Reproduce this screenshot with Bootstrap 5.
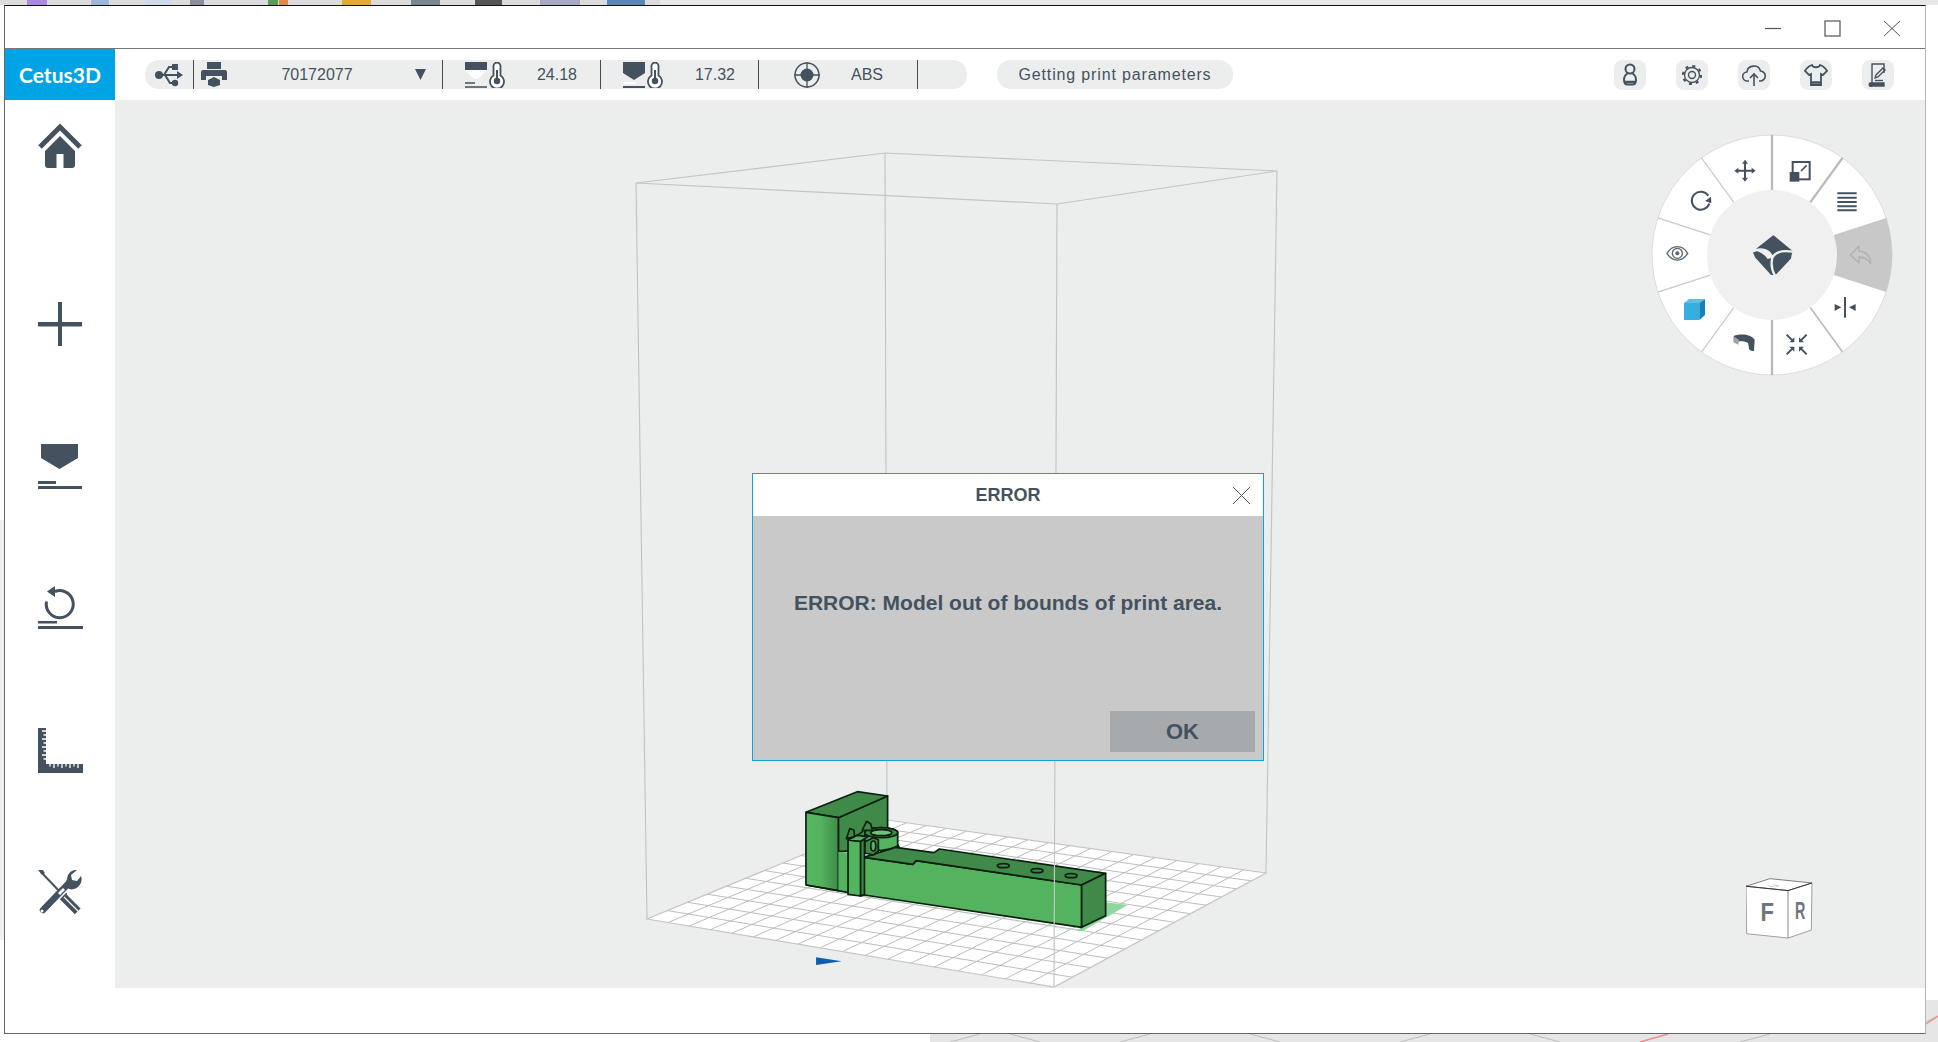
<!DOCTYPE html>
<html lang="en">
<head>
    <meta charset="UTF-8">
    <title>Cetus3D</title>
    <link href="https://cdn.jsdelivr.net/npm/bootstrap@5.3.0/dist/css/bootstrap.min.css" rel="stylesheet">
    <style>
        html, body {
            margin: 0;
            width: 1938px;
            height: 1042px;
            overflow: hidden;
            background: #fff;
            font-family: "Liberation Sans", Arial, sans-serif;
            color: #44525f;
        }
        svg { display: block; }
        .desk-back { position: absolute; left: 0; top: 0; z-index: 0; }
        .app-window {
            position: relative;
            z-index: 1;
            margin: 5px 0 0 4px;
            width: 1922px;
            height: 1029px;
            background: #fff;
            border-top: 1px solid #111;
            border-left: 1px solid #666;
            border-right: 1px solid #b5b5b5;
            border-bottom: 1px solid #666;
        }
        .title-strip { height: 43px; border-bottom: 1px solid #777; padding: 2px 24px 0 0; gap: 42px; }
        .tool-strip { height: 51px; padding-right: 31px; }
        .brand-box {
            width: 110px;
            height: 51px;
            background: #00a4e4;
            color: #fff;
            font-family: Lato, "Liberation Sans", sans-serif;
            font-size: 21px;
            font-weight: 700;
        }
        .tool-pill { height: 29px; background: #eceeed; border-radius: 14px; font-size: 16px; }
        .status-pill { width: 822px; margin-left: 30px; }
        .msg-pill { width: 236px; margin-left: 30px; font-size: 16px; letter-spacing: .85px; }
        .pill-cell { height: 29px; border-left: 1px solid #4a4a4a; position: relative; }
        .pill-cell:first-child { border-left: 0; }
        .cell-usb { width: 48px; padding-left: 10px; }
        .cell-printer { width: 249px; padding-left: 7px; }
        .cell-temp { width: 158px; padding-left: 22px; }
        .cell-mat { width: 159px; padding-left: 35px; }
        .cell-end { width: 49px; }
        .serial-no { width: 180px; text-align: center; }
        .temp-val { width: 92px; text-align: center; padding-left: 12px; }
        .mat-val { width: 82px; text-align: center; padding-left: 12px; }
        .side-btns { gap: 30px; }
        .side-btn { width: 32px; height: 30px; background: #eceeed; border-radius: 8px; }
        .work-row { height: 888px; }
        .side-rail { width: 110px; padding-top: 23px; }
        .rail-btn { width: 110px; height: 45px; margin-bottom: 97px; }
        .rail-btn.first-one { margin-bottom: 134px; }
        .view-area { width: 1810px; height: 888px; background: #eceeed; position: relative; }
        .view-area svg.scene { position: absolute; left: 0; top: 0; }
        .radial-box { position: absolute; left: 1525px; top: 25px; }
        .cube-box { position: absolute; left: 1631px; top: 778px; }
        .error-box {
            position: absolute;
            left: 637px;
            top: 373px;
            width: 512px;
            height: 288px;
            border: 1px solid #0fa3dc;
            background: #c9c9c9;
            border-radius: 0;
        }
        .error-head {
            height: 42px;
            background: #fff;
            font-size: 18px;
            font-weight: 700;
            position: relative;
        }
        .error-x { position: absolute; right: 12px; top: 12px; }
        .error-text { font-size: 21px; font-weight: 700; padding-top: 71px; height: 195px; }
        .error-foot { padding-right: 8px; }
        .ok-btn {
            width: 145px;
            height: 41px;
            background: #a6aaad;
            border: 0;
            border-radius: 0;
            font-size: 22px;
            font-weight: 700;
            color: #44525f;
            padding: 0;
        }
        .floor-line { stroke: #bdbdbd; stroke-width: 1; fill: none; }
        .frame-line { stroke: #c4c4c4; stroke-width: 1.2; fill: none; }
        .mdl * { vector-effect: non-scaling-stroke; stroke-linejoin: round; }
        .mdl .edge { stroke: #0d1f10; stroke-width: 1.7; }
        .cube-txt { font-family: "Liberation Sans", sans-serif; font-weight: 700; fill: #6e757b; }
    </style>
</head>
<body>
    <!-- other windows behind the app -->
    <svg class="desk-back" width="1938" height="1042" viewBox="0 0 1938 1042">
        <rect width="1938" height="5" fill="#e8e8e8"/>
        <rect width="660" height="5" fill="#dcdcdc"/>
        <rect x="27" width="20" height="5" fill="#a98ae0"/>
        <rect x="91" width="18" height="5" fill="#9bb8dc"/>
        <rect x="145" width="27" height="5" fill="#cfd9ea"/>
        <rect x="190" width="14" height="5" fill="#8a8f99"/>
        <rect x="268" width="10" height="5" fill="#5c9a58"/>
        <rect x="279" width="9" height="5" fill="#e08a4a"/>
        <rect x="342" width="29" height="5" fill="#e0a93a"/>
        <rect x="411" width="29" height="5" fill="#7b8490"/>
        <rect x="475" width="27" height="5" fill="#555"/>
        <rect x="540" width="40" height="5" fill="#a9a9c4"/>
        <rect x="607" width="38" height="5" fill="#5b86b5"/>
        <rect x="0" y="520" width="4" height="420" fill="#efefef"/>
        <rect x="1926" y="0" width="12" height="5" fill="#e8e8e8"/>
        <rect x="930" y="1034" width="1008" height="8" fill="#e6e6e6"/>
        <rect x="1926" y="1000" width="12" height="42" fill="#e6e6e6"/>
        <path d="M950 1042l30-8M1010 1034l30 8M1120 1042l30-8M1250 1034l30 8M1400 1042l30-8M1530 1034l30 8M1740 1042l30-8M1926 1022l12-6" stroke="#bdbdbd" fill="none"/>
        <path d="M1640 1042l28-8M1926 1024l12-8" stroke="#ee8f8f" stroke-width="1.5" fill="none"/>
    </svg>

    <div class="app-window d-flex flex-column">
        <div class="title-strip d-flex align-items-center justify-content-end">
            <svg width="17" height="17" viewBox="0 0 17 17"><path d="M0 8.500h16" stroke="#555" stroke-width="1.200"/></svg>
            <svg width="17" height="17" viewBox="0 0 17 17"><rect x="1" y="1" width="15" height="15" fill="none" stroke="#555" stroke-width="1.200"/></svg>
            <svg width="18" height="17" viewBox="0 0 18 17"><path d="M1 1l16 15M17 1L1 16" stroke="#555" stroke-width="1"/></svg>
        </div>

        <div class="tool-strip d-flex align-items-center">
            <div class="brand-box d-flex align-items-center justify-content-center">Cetus3D</div>
            <div class="tool-pill status-pill d-flex align-items-center">
                <div class="pill-cell cell-usb d-flex align-items-center">
                    <svg width="28" height="24" viewBox="0 0 28 24" fill="#44525f">
                        <circle cx="4" cy="12" r="4"/>
                        <path d="M4 12h19" stroke="#44525f" stroke-width="2"/>
                        <path d="M28 12l-6-4v8z"/>
                        <path d="M9 12l5-8h4M10 12l5 8h3" fill="none" stroke="#44525f" stroke-width="2"/>
                        <rect x="17" y="1" width="6" height="6"/>
                        <circle cx="20" cy="20" r="3.200"/>
                    </svg>
                </div>
                <div class="pill-cell cell-printer d-flex align-items-center">
                    <svg width="26" height="25" viewBox="0 0 26 25" fill="#44525f">
                        <path d="M6 0h14v7H6z"/>
                        <path d="M2 8h22a2 2 0 0 1 2 2v8h-5v-4H5v4H0v-8a2 2 0 0 1 2-2z"/>
                        <path d="M13 15l6 3v5l-6 2-6-2v-5z"/>
                    </svg>
                    <span class="serial-no">70172077</span>
                    <svg width="11" height="11" viewBox="0 0 11 11" fill="#44525f" class="ms-2"><path d="M0 0h11L5.500 11z"/></svg>
                </div>
                <div class="pill-cell cell-temp d-flex align-items-center">
                    <svg width="40" height="26" viewBox="0 0 40 26">
                        <rect width="22" height="8" fill="#44525f"/>
                        <path d="M0 8h22L13 17H9z" fill="#fff"/>
                        <rect y="20" width="10" height="2" fill="#6b7680"/>
                        <rect y="24" width="22" height="2" fill="#6b7680"/>
                        <path d="M28.500 4a3.500 3.500 0 0 1 7 0v9.500a7 7 0 1 1-7 0z" fill="#fff" stroke="#44525f" stroke-width="1.800"/>
                        <circle cx="32" cy="19" r="3.200" fill="#44525f"/>
                        <rect x="31" y="8" width="2" height="10" fill="#44525f"/>
                    </svg>
                    <span class="temp-val">24.18</span>
                </div>
                <div class="pill-cell cell-temp d-flex align-items-center">
                    <svg width="40" height="26" viewBox="0 0 40 26">
                        <path d="M0 0h22v11L11 18 0 11z" fill="#44525f"/>
                        <rect y="20" width="13" height="2" fill="#fff"/>
                        <rect y="24" width="22" height="2" fill="#44525f"/>
                        <path d="M28.500 4a3.500 3.500 0 0 1 7 0v9.500a7 7 0 1 1-7 0z" fill="#fff" stroke="#44525f" stroke-width="1.800"/>
                        <circle cx="32" cy="19" r="3.200" fill="#44525f"/>
                        <rect x="31" y="8" width="2" height="10" fill="#44525f"/>
                    </svg>
                    <span class="temp-val">17.32</span>
                </div>
                <div class="pill-cell cell-mat d-flex align-items-center">
                    <svg width="26" height="26" viewBox="0 0 26 26">
                        <circle cx="13" cy="13" r="12" fill="none" stroke="#44525f" stroke-width="1.500"/>
                        <circle cx="13" cy="13" r="6.500" fill="#44525f"/>
                        <path d="M13 0v26M0 13h26" stroke="#44525f" stroke-width="1.300"/>
                    </svg>
                    <span class="mat-val">ABS</span>
                </div>
                <div class="pill-cell cell-end"></div>
            </div>
            <div class="tool-pill msg-pill d-flex align-items-center justify-content-center">Getting print parameters</div>
            <div class="side-btns d-flex ms-auto">
                <div class="side-btn d-flex align-items-center justify-content-center">
                    <svg width="16" height="23" viewBox="0 0 16 23" fill="none" stroke="#44525f" stroke-width="2">
                        <circle cx="8" cy="6" r="4.500"/>
                        <path d="M5.500 10.500C3 12 2 14.500 2 17c0 3 1.500 4.500 3.500 4.500h5C12.500 21.500 14 20 14 17c0-2.500-1-5-3.500-6.500"/>
                        <path d="M3 19h10" stroke-width="2.500"/>
                    </svg>
                </div>
                <div class="side-btn d-flex align-items-center justify-content-center">
                    <svg width="22" height="24" viewBox="0 0 22 24" fill="none" stroke="#44525f">
                        <circle cx="11" cy="12" r="3.500" stroke-width="1.400"/>
                        <circle cx="11" cy="12" r="7.500" stroke-width="1.300"/>
                        <circle cx="11" cy="12" r="9" stroke-width="2.200" stroke-dasharray="3 4.070"/>
                    </svg>
                </div>
                <div class="side-btn d-flex align-items-center justify-content-center">
                    <svg width="24" height="24" viewBox="0 0 24 24" fill="none" stroke="#44525f" stroke-width="1.600">
                        <path d="M7 18H5.500a4.500 4.500 0 0 1-.6-9A7 7 0 0 1 18.500 8a5 5 0 0 1-.5 10h-1"/>
                        <path d="M12 23V11M8 15l4-4 4 4"/>
                    </svg>
                </div>
                <div class="side-btn d-flex align-items-center justify-content-center">
                    <svg width="24" height="22" viewBox="0 0 24 22" fill="none" stroke="#44525f" stroke-width="1.800">
                        <path d="M8 1C5 2 3 3 1 7l4 4 2-1v11h10V10l2 1 4-4c-2-4-4-5-7-6-1 3-7 3-8 0z"/>
                        <path d="M7 18.500h10" stroke-width="2.500"/>
                    </svg>
                </div>
                <div class="side-btn d-flex align-items-center justify-content-center">
                    <svg width="20" height="24" viewBox="0 0 20 24" fill="none" stroke="#44525f" stroke-width="1.400">
                        <path d="M16 10V1H4v19"/>
                        <path d="M2 20h14v3H4a1.500 1.500 0 0 1-2-3z" fill="#44525f"/>
                        <path d="M7 15l1-3 7-7 2 2-7 7z"/>
                        <path d="M7 17.500h8"/>
                    </svg>
                </div>
            </div>
        </div>

        <div class="work-row d-flex">
            <div class="side-rail d-flex flex-column">
                <div class="rail-btn first-one d-flex justify-content-center">
                    <svg width="44" height="45" viewBox="0 0 44 45" fill="#44525f">
                        <path d="M2 24L22 4l20 20" fill="none" stroke="#44525f" stroke-width="5"/>
                        <path fill-rule="evenodd" d="M22 13l15 15v14a3 3 0 0 1-3 3H10a3 3 0 0 1-3-3V28zM18.500 31v14h7V31z"/>
                    </svg>
                </div>
                <div class="rail-btn d-flex justify-content-center">
                    <svg width="44" height="45" viewBox="0 0 44 45" fill="#44525f">
                        <rect x="20" y="0" width="4" height="44"/>
                        <rect x="0" y="20" width="44" height="4.500"/>
                    </svg>
                </div>
                <div class="rail-btn d-flex justify-content-center">
                    <svg width="44" height="45" viewBox="0 0 44 45" fill="#44525f">
                        <path d="M3 0h37v14L21.500 25 3 14z"/>
                        <rect x="0" y="37" width="18" height="3"/>
                        <rect x="0" y="42" width="44" height="3"/>
                    </svg>
                </div>
                <div class="rail-btn d-flex justify-content-center">
                    <svg width="45" height="45" viewBox="0 0 45 45" fill="#44525f">
                        <path d="M17 5.500A13.500 13.500 0 1 1 8.500 15.500" fill="none" stroke="#44525f" stroke-width="3"/>
                        <path d="M17 0v11L9 5.500z"/>
                        <rect x="0" y="35" width="19" height="2.500"/>
                        <rect x="0" y="40" width="45" height="3"/>
                    </svg>
                </div>
                <div class="rail-btn d-flex justify-content-center">
                    <svg width="45" height="45" viewBox="0 0 45 45">
                        <path d="M0 0h8v36h37v9H0z" fill="#44525f"/>
                        <path d="M8 3h-4M8 7h-2.500M8 11h-4M8 15h-2.500M8 19h-4M8 23h-2.500M8 27h-4M8 31h-2.500M12 36v2.500M16 36v4M20 36v2.500M24 36v4M28 36v2.500M32 36v4M36 36v2.500M40 36v4" stroke="#fff" stroke-width="1.300" fill="none"/>
                    </svg>
                </div>
                <div class="rail-btn d-flex justify-content-center">
                    <svg width="44" height="45" viewBox="0 0 44 45" fill="#44525f">
                        <path d="M3 2l20 21" stroke="#44525f" stroke-width="2" fill="none"/>
                        <path d="M0 0l4-1 3 4-3 2z"/>
                        <path d="M5 40L30 14" stroke="#44525f" stroke-width="6.500" stroke-linecap="round" fill="none"/>
                        <circle cx="4" cy="41" r="1.500" fill="#fff"/>
                        <path d="M29 9a9 9 0 0 1 10-9l-6 5 1 5 5 1 4-5a10 10 0 0 1-12 13 8 8 0 0 1-2-10z"/>
                        <path d="M25 26l15 15" stroke="#44525f" stroke-width="9" fill="none"/>
                        <path d="M29 24l14 14M26 27l14 14" stroke="#fff" stroke-width="1.200" fill="none"/>
                        <path d="M20 23l5-5 2 2-5 5z" fill="#fff"/>
                    </svg>
                </div>
            </div>

            <div class="view-area">
                <svg class="scene" width="1810" height="888" viewBox="115 100 1810 888">
                    <polygon points="647,919 1054,987 1266,873 887,820" fill="#fff"/>
                    <g id="floorGrid" class="floor-line"></g>
                    <path class="frame-line" d="M636 183L885 153L1277 171L1057 204Z M885 153L887 820 M647 919L1054 987L1266 873L887 820Z M636 183L647 919 M1277 171L1266 873"/>

                    <g class="mdl" transform="translate(630 770) scale(.42092 .33333)">
                        <polygon fill="#8fd69f" points="408,350 520,372 1060,482 1073,472 1130,397 1182,405 1075,484 1045,480"/>
                        <polygon fill="#3f8a49" class="edge" points="495,143 612,78 612,175 640,232 495,245"/>
                        <polygon fill="#3f8a49" class="edge" points="418,127 540,65 612,78 495,143"/>
                        <defs><linearGradient id="blockShade"><stop offset="0" stop-color="#57b662"/><stop offset=".45" stop-color="#55b360"/><stop offset="1" stop-color="#3f8a49"/></linearGradient></defs>
                        <polygon fill="url(#blockShade)" class="edge" points="418,127 495,143 495,362 418,345"/>
                        <polygon fill="#54b35f" points="495,245 525,250 525,368 495,362"/>
                        <path class="edge" fill="none" d="M418 345L520 368"/>
                        <polygon fill="#54b35f" class="edge" points="556,262 672,283 680,272 1073,345 1073,472 556,375"/>
                        <polygon fill="#3f8a49" class="edge" points="556,262 630,232 722,248 735,237 1130,310 1073,345 680,272 672,283"/>
                        <polygon fill="#3f8a49" class="edge" points="1073,345 1130,310 1130,437 1073,472"/>
                        <ellipse cx="887" cy="287" rx="14" ry="6" fill="#3f8a49" class="edge"/>
                        <ellipse cx="967" cy="302" rx="14" ry="6" fill="#3f8a49" class="edge"/>
                        <ellipse cx="1048" cy="317" rx="14" ry="6" fill="#3f8a49" class="edge"/>
                        <path class="edge" fill="#54b35f" d="M558 188a39 15 0 0 1 78 0v40q-20 12-40 14l-38-10z"/>
                        <ellipse cx="597" cy="188" rx="39" ry="15" fill="#3f8a49" class="edge"/>
                        <ellipse cx="597" cy="188" rx="25" ry="9" fill="#6cc478" class="edge"/>
                        <path class="edge" fill="#3f8a49" d="M558 215l20-12 12 6v34l-12 12-20-6z"/>
                        <ellipse cx="578" cy="228" rx="6" ry="15" fill="#54b35f" class="edge"/>
                        <path class="edge" fill="#3f8a49" d="M514 206l8-30 10 4 2 26zM552 180l10-26 10 8 4 20z"/>
                        <path fill="none" class="edge" d="M514 205c14-2 30-10 40-22"/>
                        <polygon fill="#54b35f" class="edge" points="518,210 548,214 548,378 518,373"/>
                        <polygon fill="#3f8a49" class="edge" points="548,214 557,207 557,374 548,378"/>
                        <polygon fill="#54b35f" class="edge" points="518,210 540,196 565,200 548,214"/>
                        <polygon fill="#0b5fae" points="442,562 503,574 442,585"/>
                    </g>
                    <path class="frame-line" d="M1057 204L1054 987"/>
                </svg>

                <svg class="radial-box" width="260" height="260" viewBox="0 0 780 780">
                    <circle cx="396" cy="390" r="360" fill="#fff" stroke="#dcdcdc" stroke-width="3"/>
                    <path d="M581.500 329.700L738.400 278.800A360 360 0 0 1 738.400 501.200L581.500 450.300Z" fill="#c8c8c8"/>
                    <g stroke="#c9c9c9" stroke-width="3.500">
                        <line x1="396" y1="30" x2="396" y2="195" stroke="#b9b9b9" stroke-width="7"/>
                        <line x1="396" y1="30" x2="396" y2="195" stroke="#b9b9b9" stroke-width="7" transform="rotate(36 396 390)"/>
                        <line x1="396" y1="30" x2="396" y2="195" stroke="#bdbdbd" stroke-width="5" transform="rotate(144 396 390)"/>
                        <line x1="396" y1="30" x2="396" y2="195" stroke="#b9b9b9" stroke-width="7" transform="rotate(180 396 390)"/>
                        <line x1="396" y1="30" x2="396" y2="195" transform="rotate(216 396 390)"/>
                        <line x1="396" y1="30" x2="396" y2="195" transform="rotate(252 396 390)"/>
                        <line x1="396" y1="30" x2="396" y2="195" transform="rotate(288 396 390)"/>
                        <line x1="396" y1="30" x2="396" y2="195" transform="rotate(324 396 390)"/>
                    </g>
                    <circle cx="396" cy="390" r="195" fill="#f0f0f0"/>

                    <!-- logo -->
                    <path d="M400 333l55 45-4 22-45 48h-12l-47-52-7-16z" fill="#44525f" stroke="#44525f" stroke-width="4" stroke-linejoin="round"/>
                    <path d="M336 380c24-12 52-8 61 18M458 380c-28-4-52 0-61 18M397 398c-4 18-2 38 8 54" fill="none" stroke="#f0f0f0" stroke-width="7"/>
                    <path d="M345 376c24-6 44 0 52 22l-14 4c-8-12-20-20-38-26z" fill="#f0f0f0"/>

                    <!-- move -->
                    <g fill="#44525f">
                        <path d="M315 115v44M293 137h44" stroke="#44525f" stroke-width="6"/>
                        <path d="M315 104l9 12h-18zM315 170l9-12h-18zM283 137l12-9v18zM347 137l-12-9v18z"/>
                    </g>
                    <!-- scale -->
                    <rect x="458" y="111" width="51" height="52" fill="none" stroke="#44525f" stroke-width="6"/>
                    <rect x="449" y="141" width="29" height="29" fill="#44525f"/>
                    <path d="M483 138l17-17" stroke="#44525f" stroke-width="5"/>
                    <!-- layers -->
                    <path d="M592 205h58M592 218h58M592 231h58M592 244h58M592 256h58" stroke="#44525f" stroke-width="6"/>
                    <!-- undo -->
                    <path d="M631 390l26-26v14c20 2 34 12 35 38-8-14-18-20-35-20v18z" fill="none" stroke="#b0b0b0" stroke-width="4" stroke-linejoin="round"/>
                    <!-- mirror -->
                    <rect x="612" y="516" width="6" height="62" fill="#44525f"/>
                    <path d="M584 537l20 10-20 11zM647 537l-20 10 20 11z" fill="#44525f"/>
                    <!-- center all -->
                    <path d="M440 629l17 17M500 629l-17 17M440 688l17-17M500 688l-17-17" stroke="#44525f" stroke-width="6"/>
                    <path d="M463 652v-15l-15 15zM477 652v-15l15 15zM463 665v15l-15-15zM477 665v15l15-15z" fill="#44525f"/>
                    <!-- shape -->
                    <path d="M282 632c20-6 50-6 62 12l-2 34c-6 0-10-2-14-4l-4-20c-10-6-22-6-30-4l-12-6z" fill="#44525f"/>
                    <path d="M280 634v18l15 7 2-15z" fill="#9ea4a9"/>
                    <!-- cube -->
                    <path d="M147 522h48l-17 12h-46z" fill="#5cbde6"/>
                    <rect x="132" y="534" width="46" height="51" fill="#37aee0"/>
                    <path d="M178 534l17-12v48l-17 15z" fill="#1584b8"/>
                    <!-- eye -->
                    <path d="M81 385c16-27 46-27 62 0-16 27-46 27-62 0z" fill="none" stroke="#5b6772" stroke-width="4"/>
                    <circle cx="112" cy="385" r="15" fill="none" stroke="#5b6772" stroke-width="4"/>
                    <circle cx="112" cy="385" r="6" fill="#5b6772"/>
                    <!-- rotate -->
                    <path d="M205 212a27 27 0 1 0 3 24" fill="none" stroke="#44525f" stroke-width="6"/>
                    <path d="M195 228l19 7-1-20z" fill="#44525f"/>
                </svg>

                <svg class="cube-box" width="68" height="63" viewBox="78 55 205 190">
                    <path d="M78 80L150 57L277 70L205 93Z" fill="#fff" stroke="#666" stroke-width="2.500"/>
                    <path d="M78 80L205 93L205 236L80 223Z" fill="#fff" stroke="#8c8c8c" stroke-width="2.500"/>
                    <path d="M205 93L277 70L275 212L205 236Z" fill="#fff" stroke="#8c8c8c" stroke-width="2.500"/>
                    <path d="M78 80L205 93L277 70" fill="none" stroke="#222" stroke-width="2.500"/>
                    <text class="cube-txt" x="0" y="0" font-size="78" transform="translate(122 184) scale(.85 1)">F</text>
                    <text class="cube-txt" x="0" y="0" font-size="72" transform="translate(226 180) scale(.6 1)">R</text>
                    <text class="cube-txt" x="0" y="0" font-size="34" style="fill:#c2c2c2" transform="matrix(1 -.2 .9 .2 160 84)">U</text>
                </svg>

                <div class="error-box card">
                    <div class="error-head d-flex align-items-center justify-content-center">
                        ERROR
                        <svg class="error-x" width="19" height="19" viewBox="0 0 19 19"><path d="M1 1l17 17M18 1L1 18" stroke="#555" stroke-width="1"/></svg>
                    </div>
                    <div class="error-text text-center">ERROR: Model out of bounds of print area.</div>
                    <div class="error-foot d-flex justify-content-end">
                        <button type="button" class="btn ok-btn">OK</button>
                    </div>
                </div>
            </div>
        </div>
    </div>

    <script>
        // floor grid: project the bed's 18 x 13 cells onto the perspective quad
        const q = [[647, 919], [1054, 987], [1266, 873], [887, 820]];
        const dx1 = q[1][0] - q[2][0], dx2 = q[3][0] - q[2][0], sx = q[0][0] - q[1][0] + q[2][0] - q[3][0];
        const dy1 = q[1][1] - q[2][1], dy2 = q[3][1] - q[2][1], sy = q[0][1] - q[1][1] + q[2][1] - q[3][1];
        const det = dx1 * dy2 - dx2 * dy1;
        const g = (sx * dy2 - dx2 * sy) / det, h = (dx1 * sy - sx * dy1) / det;
        const a = q[1][0] - q[0][0] + g * q[1][0], b = q[3][0] - q[0][0] + h * q[3][0];
        const d = q[1][1] - q[0][1] + g * q[1][1], e = q[3][1] - q[0][1] + h * q[3][1];
        function pt(u, v) {
            const w = g * u + h * v + 1;
            return ((a * u + b * v + q[0][0]) / w).toFixed(1) + ' ' + ((d * u + e * v + q[0][1]) / w).toFixed(1);
        }
        let path = '';
        for (let i = 1; i < 18; i++) path += 'M' + pt(i / 18, 0) + 'L' + pt(i / 18, 1);
        for (let j = 1; j < 13; j++) path += 'M' + pt(0, j / 13) + 'L' + pt(1, j / 13);
        const gridPath = document.createElementNS('http://www.w3.org/2000/svg', 'path');
        gridPath.setAttribute('d', path);
        document.getElementById('floorGrid').appendChild(gridPath);
    </script>
    <script src="https://cdn.jsdelivr.net/npm/bootstrap@5.3.0/dist/js/bootstrap.bundle.min.js"></script>
</body>
</html>
